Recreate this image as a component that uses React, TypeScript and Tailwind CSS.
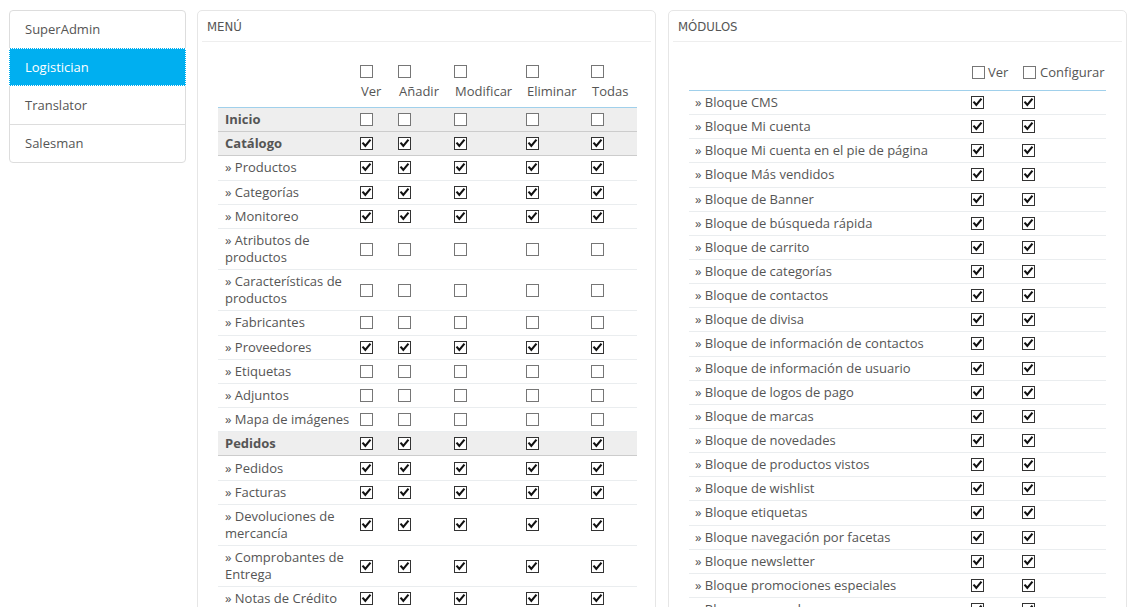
import React from "react";

function Cb({ checked }: { checked: boolean }) {
  return (
    <span
      className={
        checked
          ? "relative block w-[13px] h-[13px] border border-[#333333] bg-white"
          : "relative block w-[13px] h-[13px] border border-[#767676] bg-white"
      }
    >
      {checked && (
        <svg
          className="absolute left-0 top-0"
          width="11"
          height="11"
          viewBox="0 0 11 11"
        >
          <path
            d="M2.2 5.4 L4.3 7.8 L8.8 2.4"
            fill="none"
            stroke="#111111"
            strokeWidth="2.1"
            strokeLinecap="square"
          />
        </svg>
      )}
    </span>
  );
}

type MenuRow = { name: string; second?: string; parent?: boolean; checked: boolean };

const menuRows: MenuRow[] = [
  { name: "Inicio", parent: true, checked: false },
  { name: "Catálogo", parent: true, checked: true },
  { name: "Productos", checked: true },
  { name: "Categorías", checked: true },
  { name: "Monitoreo", checked: true },
  { name: "Atributos de", second: "productos", checked: false },
  { name: "Características de", second: "productos", checked: false },
  { name: "Fabricantes", checked: false },
  { name: "Proveedores", checked: true },
  { name: "Etiquetas", checked: false },
  { name: "Adjuntos", checked: false },
  { name: "Mapa de imágenes", checked: false },
  { name: "Pedidos", parent: true, checked: true },
  { name: "Pedidos", checked: true },
  { name: "Facturas", checked: true },
  { name: "Devoluciones de", second: "mercancía", checked: true },
  { name: "Comprobantes de", second: "Entrega", checked: true },
  { name: "Notas de Crédito", checked: true },
  { name: "Estados", checked: true },
  { name: "Mensajes de Pedidos", checked: true },
  { name: "Clientes", parent: true, checked: true },
];

const modules = [
  "Bloque CMS",
  "Bloque Mi cuenta",
  "Bloque Mi cuenta en el pie de página",
  "Bloque Más vendidos",
  "Bloque de Banner",
  "Bloque de búsqueda rápida",
  "Bloque de carrito",
  "Bloque de categorías",
  "Bloque de contactos",
  "Bloque de divisa",
  "Bloque de información de contactos",
  "Bloque de información de usuario",
  "Bloque de logos de pago",
  "Bloque de marcas",
  "Bloque de novedades",
  "Bloque de productos vistos",
  "Bloque de wishlist",
  "Bloque etiquetas",
  "Bloque navegación por facetas",
  "Bloque newsletter",
  "Bloque promociones especiales",
  "Bloque proveedores",
  "Bloque redes sociales",
];

const menuCols = ["Ver", "Añadir", "Modificar", "Eliminar", "Todas"];

function PanelHeader({ title }: { title: string }) {
  return (
    <div
      className="h-[31px] flex items-center pl-[5px] border-b border-[#eeeeee] text-[13px] text-[#555555] uppercase"
      style={{ fontFamily: '"DejaVu Sans Condensed", "Liberation Sans Narrow", "Ubuntu Condensed", sans-serif' }}
    >
      {title}
    </div>
  );
}

export default function App() {
  return (
    <div
      className="w-full h-[607px] overflow-hidden bg-white text-[13px] text-[#555555] leading-[17px]"
      style={{ fontFamily: '"Open Sans", "Noto Sans", sans-serif' }}
    >
      <div className="flex items-start pt-[10px] pl-[9px]">
        {/* Sidebar */}
        <div className="w-[177px] border border-[#dddddd] rounded-[4px] bg-white">
          <div className="h-[37px] flex items-center pl-[15px]">SuperAdmin</div>
          <div className="h-[38px] -mx-px flex items-center pl-[16px] bg-[#00aff0] text-white outline outline-1 outline-dotted outline-white -outline-offset-1">
            Logistician
          </div>
          <div className="h-[38px] flex items-center pl-[15px]">Translator</div>
          <div className="h-[38px] flex items-center pl-[15px] border-t border-[#dddddd]">Salesman</div>
        </div>

        {/* Menu panel */}
        <div className="ml-[11px] w-[459px] h-[700px] border border-[#e6e6e6] rounded-[5px] px-[4px] bg-white">
          <PanelHeader title="Menú" />
          <div className="ml-[16px] mr-[14px]">
            <div className="grid grid-cols-[137px_38px_56px_72px_65px_51px] border-b border-[#a0d0eb] pt-[23px] pb-[7px]">
              <div />
              {menuCols.map((c) => (
                <div key={c} className="pl-[5px] flex flex-col">
                  <Cb checked={false} />
                  <span className="mt-[5px] pl-px whitespace-nowrap">{c}</span>
                </div>
              ))}
            </div>
            {menuRows.map((r, i) => (
              <div
                key={i}
                className={
                  r.parent
                    ? "grid grid-cols-[137px_38px_56px_72px_65px_51px] bg-[#eeeeee] border-b border-[#cccccc] font-bold"
                    : "grid grid-cols-[137px_38px_56px_72px_65px_51px] border-b border-[#eaedef]"
                }
              >
                <div className="pl-[7px] py-[3.1px] whitespace-nowrap">
                  {r.parent ? r.name : `» ${r.name}`}
                  {r.second && (
                    <>
                      <br />
                      {r.second}
                    </>
                  )}
                </div>
                {menuCols.map((c) => (
                  <div key={c} className="pl-[5px] flex items-center">
                    <Cb checked={r.checked} />
                  </div>
                ))}
              </div>
            ))}
          </div>
        </div>

        {/* Modules panel */}
        <div className="ml-[12px] w-[459px] h-[700px] border border-[#e6e6e6] rounded-[5px] px-[4px] bg-white">
          <PanelHeader title="Módulos" />
          <div className="ml-[16px] mr-[16px]">
            <div className="grid grid-cols-[277px_51px_89px] border-b border-[#a0d0eb] pt-[24px] pb-[11px]">
              <div />
              <div className="pl-[6px] flex items-center h-[13px]">
                <Cb checked={false} />
                <span className="ml-[3px]">Ver</span>
              </div>
              <div className="pl-[6px] flex items-center h-[13px]">
                <Cb checked={false} />
                <span className="ml-[4px]">Configurar</span>
              </div>
            </div>
            {modules.map((m, i) => (
              <div
                key={i}
                className="grid grid-cols-[277px_51px_89px] h-[24.15px] border-b border-[#eaedef] items-center"
              >
                <div className="pl-[6px] whitespace-nowrap">» {m}</div>
                <div className="pl-[5px]">
                  <Cb checked={true} />
                </div>
                <div className="pl-[5px]">
                  <Cb checked={true} />
                </div>
              </div>
            ))}
          </div>
        </div>
      </div>
    </div>
  );
}
